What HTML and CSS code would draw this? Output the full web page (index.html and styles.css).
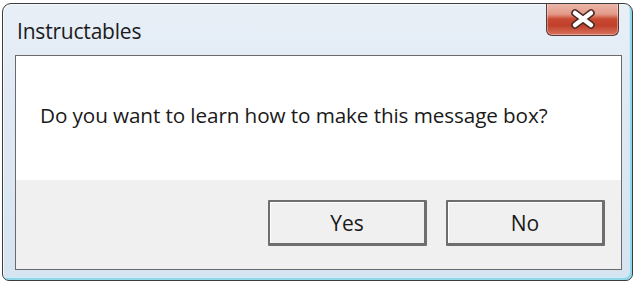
FILE: index.html
```html
<!DOCTYPE html>
<html>
<head>
<meta charset="utf-8">
<link rel="stylesheet" href="styles.css">
</head>
<body>
<div class="window">
  <div class="titlebar">
    <span class="title">Instructables</span>
    <div class="close">
      <svg width="28" height="20" viewBox="0 0 28 20">
        <path d="M6 4 L22 16 M22 4 L6 16" stroke="#4a2a26" stroke-width="7.5" stroke-linecap="round"/>
        <path d="M6 4 L22 16 M22 4 L6 16" stroke="#ffffff" stroke-width="4.5" stroke-linecap="round"/>
      </svg>
    </div>
  </div>
  <div class="content">
    <div class="message">Do you want to learn how to make this message box?</div>
    <div class="actions">
      <button class="btn">Yes</button>
      <button class="btn">No</button>
    </div>
  </div>
</div>
</body>
</html>
```
FILE: styles.css
```css
html, body {
  margin: 0;
  padding: 0;
  background: #ffffff;
}
body {
  width: 635px;
  height: 285px;
  font-family: "Open Sans", "Noto Sans", sans-serif;
}
.window {
  margin: 3px 2px 0 2px;
  height: 278px;
  box-sizing: border-box;
  border: 1px solid #3c3c3c;
  border-radius: 9px 9px 7px 7px;
  background: linear-gradient(to bottom, #e8eff7 0%, #dfe9f4 40%, #d6e4f1 100%);
  box-shadow: inset 1px 1px 0 #f6f9fc, inset -2px -2px 0 #8fd6ea, inset -3px -3px 0 #c9ecf6;
  display: flex;
  flex-direction: column;
  overflow: hidden;
}
.titlebar {
  height: 51px;
  display: flex;
  align-items: flex-start;
  justify-content: space-between;
  padding-left: 14px;
  padding-right: 13px;
}
.title {
  margin-top: 13px;
  font-size: 21px;
  color: #1b1b1b;
  letter-spacing: -0.2px;
}
.close {
  width: 73px;
  height: 33px;
  margin-top: -1px;
  box-sizing: border-box;
  border: 1px solid #5a3a36;
  border-top: none;
  border-radius: 0 0 6px 6px;
  background: linear-gradient(to bottom, #ecb9ac 0%, #e39a88 35%, #c94a32 50%, #c0402a 70%, #d8735e 100%);
  box-shadow: inset 0 0 0 1px rgba(255,255,255,0.35);
  display: flex;
  align-items: center;
  justify-content: center;
}
.content {
  margin: 0 10px 10px 12px;
  flex: 1;
  border: 1px solid #6a6a6a;
  background: #f0f0f0;
  display: flex;
  flex-direction: column;
}
.message {
  background: #ffffff;
  height: 124px;
  box-sizing: border-box;
  padding: 45px 0 0 24px;
  font-size: 20.7px;
  color: #1a1a1a;
  letter-spacing: -0.1px;
}
.actions {
  display: flex;
  justify-content: flex-end;
  gap: 19px;
  padding: 20px 16px 0 0;
}
.btn {
  width: 159px;
  height: 46px;
  box-sizing: border-box;
  font-family: "Open Sans", "Noto Sans", sans-serif;
  font-size: 21px;
  color: #1a1a1a;
  background: #f0f0f0;
  border: 2px solid #6e6e6e;
  border-bottom-width: 3px;
  border-right-width: 3px;
  border-radius: 1px;
  box-shadow: inset 1px 1px 0 #ffffff;
  padding: 0;
}
```
